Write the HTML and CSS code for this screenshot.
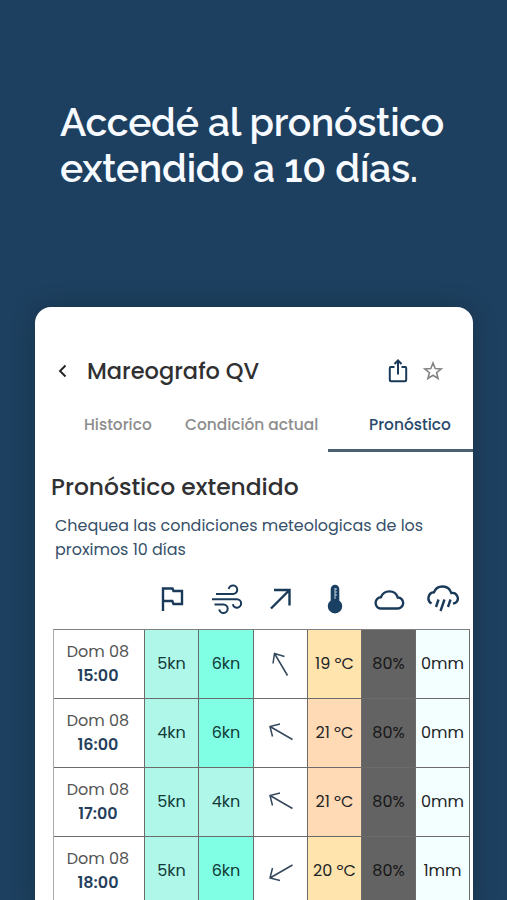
FILE: index.html
```html
<!DOCTYPE html>
<html lang="es">
<head>
    <meta charset="UTF-8">
    <title>Mareografo QV - Pronóstico</title>
    <link rel="stylesheet" href="styles.css">
</head>
<body>
    <h1 class="headline"><span class="line">Accedé al pronóstico</span> <span class="line">extendido a 10 días.</span></h1>
    <main class="card">
        <header class="top-bar">
            <svg class="back" width="12" height="16" viewBox="0 0 12 16"><path d="M9.500 2.500 4 8l5.500 5.500"/></svg>
            <h2 class="station">Mareografo QV</h2>
            <svg class="share" width="20" height="26" viewBox="0 0 20 26"><path d="M6.500 9H2.800Q1.800 9 1.800 10v12q0 1.300 1.300 1.300h13.800q1.300 0 1.300-1.300V10q0-1-1-1h-3.700M10 16.500V3.500M6.500 6 10 2.500 13.500 6"/></svg>
            <svg class="star" width="20" height="20" viewBox="0 0 20 20"><path d="m10 2 2.200 5.500 6 .4-4.600 3.800 1.500 5.800-5.100-3.200-5.100 3.200 1.500-5.800L1.800 7.900l6-.4z"/></svg>
        </header>
        <nav class="tabs">
            <a class="tab tab-history">Historico</a>
            <a class="tab tab-current">Condición actual</a>
            <a class="tab tab-forecast active">Pronóstico</a>
        </nav>
        <h3 class="section-title">Pronóstico extendido</h3>
        <p class="description"><span class="line">Chequea las condiciones meteologicas de los</span> <span class="line">proximos 10 días</span></p>
        <div class="icons">
            <span></span>
            <svg width="32" height="32" viewBox="0 0 32 32"><path d="M7 28V5.500h9.500l1 2.500h8.500v13h-8.500l-1.200-3H7"/></svg>
            <svg width="32" height="32" viewBox="0 0 32 32"><path class="thin" d="M5 11h17a4.300 4.300 0 1 0-4.300-5M1 16.300h25a4.200 4.200 0 1 1-4.200 5M3.500 21.600h9a4.200 4.200 0 1 1-4.200 4.700"/></svg>
            <svg width="32" height="32" viewBox="0 0 32 32"><path d="M6 25.500 24 7.500M9 7h15.500v15.500"/></svg>
            <svg width="32" height="32" viewBox="0 0 32 32"><path class="solid" d="M11.700 6a4.300 4.300 0 0 1 8.600 0v11.500a7.200 7.200 0 1 1-8.600 0z"/><path class="scale" d="M16 5v11M16 6h2M16 9h2M16 12h2"/></svg>
            <svg width="32" height="32" viewBox="0 0 32 32"><path d="M7.300 25.500h17.300a5.500 5.500 0 0 0 .2-11A8.900 8.900 0 0 0 8 14.200a5.700 5.700 0 0 0-.7 11.300z"/></svg>
            <svg width="32" height="32" viewBox="0 0 32 32"><path d="M4.500 20.500A6 6 0 0 1 7 9.300a9.200 9.200 0 0 1 17.300.7 5.500 5.500 0 0 1 4 10l-2.300.7M11.500 16.500l-2.500 7.500M17.500 16.500l-4 11.500M23.500 16.500l-2.500 7.500"/></svg>
        </div>
        <div class="forecast">
            <div class="cell date">Dom 08<b>15:00</b></div>
            <div class="cell wind">5kn</div>
            <div class="cell gust">6kn</div>
            <div class="cell"><svg width="30" height="30" viewBox="0 0 30 30"><path class="arrow" d="m21.500 26.500-13-22M7 14.500 8.500 4.500l10 3"/></svg></div>
            <div class="cell mild">19 ºC</div>
            <div class="cell clouds">80%</div>
            <div class="cell rain">0mm</div>

            <div class="cell date">Dom 08<b>16:00</b></div>
            <div class="cell wind">4kn</div>
            <div class="cell gust">6kn</div>
            <div class="cell"><svg width="30" height="30" viewBox="0 0 30 30"><path class="arrow" d="M26.500 21.500 4 8.500M14 6 4 8.500l2.500 10"/></svg></div>
            <div class="cell warm">21 ºC</div>
            <div class="cell clouds">80%</div>
            <div class="cell rain">0mm</div>

            <div class="cell date">Dom 08<b>17:00</b></div>
            <div class="cell wind">5kn</div>
            <div class="cell wind">4kn</div>
            <div class="cell"><svg width="30" height="30" viewBox="0 0 30 30"><path class="arrow" d="M26.500 21.500 4 8.500M14 6 4 8.500l2.500 10"/></svg></div>
            <div class="cell warm">21 ºC</div>
            <div class="cell clouds">80%</div>
            <div class="cell rain">0mm</div>

            <div class="cell date">Dom 08<b>18:00</b></div>
            <div class="cell wind">5kn</div>
            <div class="cell gust">6kn</div>
            <div class="cell"><svg width="30" height="30" viewBox="0 0 30 30"><path class="arrow" d="M26.500 9 4 22M6.500 12 4 22l10 2.500"/></svg></div>
            <div class="cell mild">20 ºC</div>
            <div class="cell clouds">80%</div>
            <div class="cell rain">1mm</div>
        </div>
    </main>
</body>
</html>
```
FILE: styles.css
```css
* {
    box-sizing: border-box;
}
body {
    margin: 0;
    height: 900px;
    overflow: hidden;
    background-color: #1e4060;
    font-family: Poppins, Inter, sans-serif;
    color: #303032;
}
h1, h2, h3, p {
    margin: 0;
}
svg {
    display: block;
    fill: none;
    stroke: #193a59;
    stroke-width: 2.4;
}
.line {
    display: block;
    white-space: nowrap;
}
.headline {
    height: 307px;
    padding: 99px 0 0 60px;
    font-family: Raleway, Lato, sans-serif;
    font-size: 39px;
    font-weight: 600;
    line-height: 46px;
    letter-spacing: -0.25px;
    color: #f7fbff;
}
.card {
    width: 438px;
    height: 610px;
    margin-left: 35px;
    background: #fff;
    border-radius: 16px;
    box-shadow: 0 0 22px rgba(12, 32, 40, 0.4);
    overflow: hidden;
}
.top-bar {
    display: flex;
    align-items: center;
    height: 96px;
    padding: 32px 30px 0 21px;
}
.back {
    stroke: #222;
    stroke-width: 1.9;
}
.station {
    flex: 1;
    margin-left: 19px;
    font-size: 22.5px;
    font-weight: 500;
    line-height: 32px;
    padding-bottom: 1px;
}
.share {
    margin-right: 15px;
    stroke-width: 2;
}
.star {
    stroke: #858585;
    stroke-width: 1.6;
}
.tabs {
    display: grid;
    grid-template-columns: 140px 153px 145px;
    height: 49px;
    font-size: 15.4px;
    font-weight: 500;
    line-height: 43px;
    color: #8c8c8c;
    white-space: nowrap;
}
.tab-history {
    padding-left: 49px;
}
.tab-current {
    padding-left: 10px;
}
.tab-forecast {
    padding-left: 41px;
}
.tab.active {
    color: #29496a;
    border-bottom: 3px solid #4a6174;
}
.section-title {
    padding: 19px 0 0 16px;
    font-size: 23.4px;
    font-weight: 500;
    line-height: 32px;
}
.description {
    padding: 11px 0 0 20px;
    font-size: 15.95px;
    line-height: 24px;
    color: #36506a;
}
.icons, .forecast {
    display: grid;
    grid-template-columns: 91px 54px 55px 54px 54px 54px 54px;
    width: 417px;
    margin-left: 18px;
}
.icons {
    height: 67px;
    padding: 21px 0 0 1px;
    justify-items: center;
}
.thin {
    stroke-width: 2;
}
.solid {
    fill: #193f62;
    stroke: none;
}
.scale {
    stroke: #c4d2df;
    stroke-width: 1;
}
.forecast {
    grid-auto-rows: 69px;
    border-top: 1px solid #808080;
    border-left: 1px solid #aaa;
    font-size: 16px;
}
.cell {
    display: flex;
    align-items: center;
    justify-content: center;
    padding-bottom: 1px;
    border-right: 1px solid #6b6b6b;
    border-bottom: 1px solid #6b6b6b;
    color: #1e2526;
    white-space: nowrap;
}
.date {
    flex-direction: column;
    padding: 0 2px 1px 0;
    line-height: 24px;
    color: #555;
}
.date b {
    font-weight: 600;
    color: #263f5c;
}
.wind {
    background: #aff7e8;
    color: #123a38;
}
.gust {
    background: #80ffe5;
    color: #123a38;
}
.mild {
    background: #ffe4ae;
}
.warm {
    background: #ffdab5;
}
.clouds {
    background: #636363;
    color: #161616;
}
.rain {
    background: #f3feff;
}
.arrow {
    stroke: #34475c;
    stroke-width: 1.5;
}
```
